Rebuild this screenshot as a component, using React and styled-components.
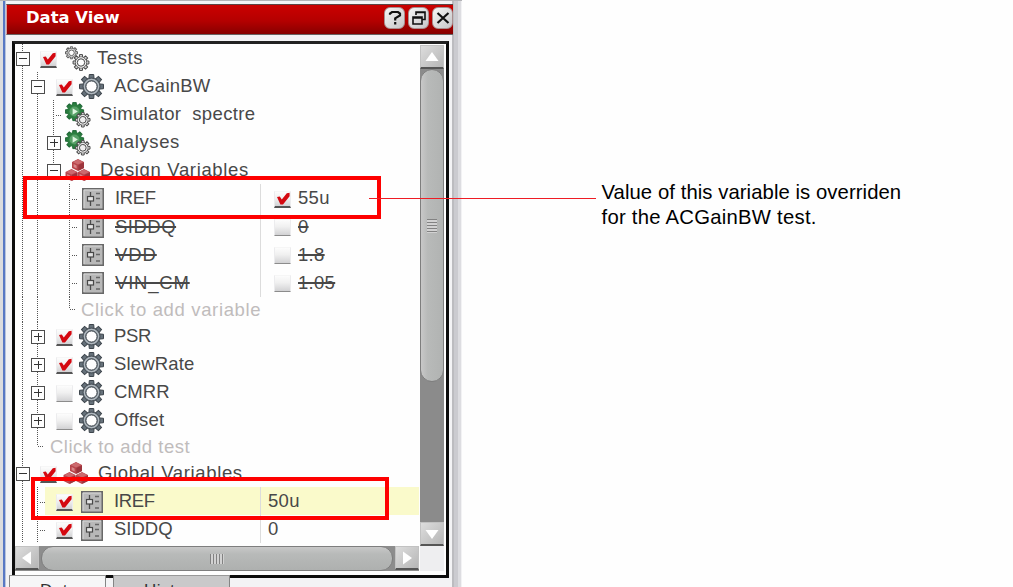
import React from "react";
import styled, { createGlobalStyle, css } from "styled-components";

const Global = createGlobalStyle`
  * { box-sizing: border-box; }
  body { margin: 0; background: #fefefe; overflow: hidden; }
`;

const Page = styled.main`
  display: flex;
  align-items: flex-start;
  position: relative;
  width: 1013px;
  height: 587px;
  overflow: hidden;
  background: #fefefe;
  font-family: "Liberation Sans", Arial, sans-serif;
`;

const Dock = styled.section`
  display: flex;
  flex-direction: column;
  flex: none;
  width: 462px;
  height: 587px;
  padding: 3px 9px 0 3px;
  border-top: 1px solid #b4b4b8;
  background: linear-gradient(90deg, #dcdcde 0 3px, #5878c4 3px 5px, #b8c4dc 5px 6px, #f3f3f5 6px 452px, #bcbcc0 452px 454px, #cbcbd0 454px 458px, #dddde1 458px 461px, #f2f2f4 461px);
`;

const TitleBar = styled.header`
  display: flex;
  align-items: center;
  flex: none;
  gap: 3px;
  margin-left: 3px;
  height: 31px;
  padding: 0 0 3px 19px;
  border: 1px solid #6a6464;
  border-top-color: #5c4444;
  border-right: 0;
  border-left-color: #d8a0a0;
  background: linear-gradient(#cb0000, #b40000 55%, #870000);
`;

const Title = styled.h1`
  flex: 1;
  margin: 0;
  color: #fff;
  font: bold 16.4px/20px "DejaVu Sans", sans-serif;
`;

const TitleButton = styled.button`
  display: grid;
  place-items: center;
  width: 21px;
  height: 22px;
  padding: 0;
  border: 1px solid #a88f8f;
  border-radius: 6px;
  background: linear-gradient(135deg, #f6f6f6, #c6c6c8);
`;

const Frame = styled.div`
  display: grid;
  grid-template-columns: 404px 26px;
  grid-template-rows: 502px 25px;
  flex: none;
  width: 437px;
  height: 537px;
  margin: 6px 0 0 9px;
  border: 3px solid #0c0c0c;
  border-top: 3px solid #222;
  border-right-width: 3px;
  background: #fefefe;
`;

const Tree = styled.div`
  overflow: hidden;
  background: #fefefe;
`;

const Row = styled.div`
  display: flex;
  align-items: center;
  width: 404px;
  height: ${(p) => p.$h || 28}px;
  background: ${(p) =>
    p.$selected ? "linear-gradient(90deg, #fefefe 30px, #fafacb 30px)" : "transparent"};
`;

const NameCell = styled.div`
  display: flex;
  align-items: center;
  flex: none;
  align-self: stretch;
  width: ${(p) => (p.$split ? 246 : 404)}px;
  border-right: ${(p) => (p.$split ? "1px solid #dcdcdc" : "0")};
`;

const ValueCell = styled.div`
  display: flex;
  align-items: center;
  padding-left: ${(p) => (p.$checked ? 13 : 7)}px;
  gap: 7px;
`;

const dotsV = "repeating-linear-gradient(180deg, #555 0 1px, transparent 1px 2px)";
const dotsH = "repeating-linear-gradient(90deg, #555 0 1px, transparent 1px 2px)";

const Guide = styled.span`
  display: flex;
  align-items: center;
  justify-content: center;
  flex: none;
  align-self: stretch;
  width: ${(p) => (p.$first ? 15 : 16)}px;
  padding-right: ${(p) => (p.$first ? 0 : 1)}px;
  background-repeat: no-repeat;
  ${(p) => p.$kind === "line" && css`
    background-image: ${dotsV};
    background-size: 1px 100%;
    background-position: 7px 0;
  `}
  ${(p) => p.$kind === "tee" && css`
    background-image: ${dotsV}, ${dotsH};
    background-size: 1px 100%, 5px 1px;
    background-position: 7px 0, 10px 15px;
  `}
  ${(p) => p.$kind === "end" && css`
    background-image: ${dotsV}, ${dotsH};
    background-size: 1px 12px, 5px 1px;
    background-position: 7px 0, 8px 12px;
  `}
  ${(p) => p.$kind === "last" && css`
    background-image: ${dotsV};
    background-size: 1px 9px;
    background-position: 7px 0;
  `}
`;

const Toggle = styled.span`
  position: relative;
  flex: none;
  width: 14px;
  height: 14px;
  margin-top: 2px;
  border: 1px solid #4c4c4c;
  background: #fefefe;
  &::before {
    content: "";
    position: absolute;
    left: 2px;
    top: 5px;
    width: 8px;
    height: 1px;
    background: #333;
  }
  &::after {
    content: "";
    display: ${(p) => (p.$open ? "none" : "block")};
    position: absolute;
    left: 6px;
    top: 2px;
    width: 1px;
    height: 8px;
    background: #333;
  }
`;

const Box = styled.span`
  display: grid;
  place-items: center;
  flex: none;
  width: 17px;
  height: 17px;
  margin: 2px 0 0 ${(p) => p.$x || 0}px;
  border: 1px solid #ececee;
  border-top-color: #f6f6f6;
  border-bottom: ${(p) => (p.$on ? "2px solid #555" : "1px solid #8c8c8c")};
  background: linear-gradient(#fcfcfc, #f0f0f0 45%, #d2d2d4);
`;

const Label = styled.span`
  flex: none;
  margin-left: ${(p) => p.$x || 0}px;
  padding-top: ${(p) => (p.$struck ? 1 : 0)}px;
  color: ${(p) => (p.$muted ? "#c0bcbc" : "#484848")};
  font-size: 18.5px;
  line-height: 24px;
  white-space: pre;
  letter-spacing: ${(p) => p.$track || 0}px;
  text-decoration: ${(p) => (p.$struck ? "line-through" : "none")};
  text-decoration-thickness: 1.5px;
`;

const IconSlot = styled.span`
  display: flex;
  flex: none;
  margin-left: ${(p) => p.$x}px;
  margin-top: 1px;
`;

const VBar = styled.div`
  display: flex;
  flex-direction: column;
  width: 24px;
  margin: 1px 0 0 1px;
  background: #8b8b8b;
`;

const HBar = styled.div`
  display: flex;
  align-items: stretch;
  height: 25px;
  background: #8d8d8d;
`;

const Arrow = styled.div`
  display: grid;
  place-items: center;
  flex: none;
  width: 24px;
  height: 24px;
  border: 1px solid #c2c2c2;
  border-bottom: 2px solid #555;
  background: linear-gradient(135deg, #ddd, #b6b6b6);
`;

const Thumb = styled.div`
  display: grid;
  place-items: center;
  border: 1px solid #7e7e7e;
  border-radius: 12px;
  ${(p) => p.$vertical
    ? css`height: 313px; background: linear-gradient(90deg, #c8c8c8, #b8bab9 30%, #b1b3b2);`
    : css`width: 354px; margin-left: 2px; margin-right: 2px; background: linear-gradient(#c8c8c8, #b8bab9 30%, #aeb0af);`}
`;

const Grip = styled.span`
  width: ${(p) => (p.$vertical ? 10 : 14)}px;
  height: ${(p) => (p.$vertical ? 14 : 10)}px;
  background: repeating-linear-gradient(${(p) => (p.$vertical ? "180deg" : "90deg")}, #828282 0 1px, #d2d2d2 1px 3px);
`;

const Spacer = styled.div`
  flex: 1;
`;

const Corner = styled.div`
  margin-left: 1px;
  width: 24px;
  background: #eeeef0;
`;

const Tabs = styled.nav`
  display: flex;
  flex: none;
  gap: 7px;
  height: 12px;
  margin: -3px 0 0 6px;
  overflow: hidden;
  position: relative;
`;

const Tab = styled.span`
  flex: none;
  width: ${(p) => p.$w}px;
  height: 30px;
  padding: 5px 0 0 ${(p) => p.$pad}px;
  border: 1px solid #858585;
  border-top-color: #999;
  background: ${(p) => (p.$active ? "#f6f6f7" : "#c9c9ca")};
  color: #333;
  font-size: 17px;
  line-height: 20px;
  letter-spacing: 0.5px;
`;

const Note = styled.p`
  display: flex;
  flex-direction: column;
  margin: 180px 0 0 139.5px;
  color: #000;
  font-size: 20.3px;
  line-height: 25px;
  white-space: pre;
`;

const NoteLine = styled.span`
  letter-spacing: ${(p) => p.$track}px;
`;

const Highlight = styled.div`
  position: absolute;
  left: ${(p) => p.$left}px;
  top: ${(p) => p.$top}px;
  width: ${(p) => p.$w}px;
  height: ${(p) => p.$h}px;
  border: 4px solid #fe0000;
`;

const Leader = styled.div`
  position: absolute;
  left: 369px;
  top: 198px;
  width: 227px;
  height: 1px;
  background: #ee1c24;
`;

const Check = () => (
  <svg width="15" height="14" viewBox="0 0 15 14">
    <path d="M2 5 L4.8 4.6 L6.8 7.6 L11.8 1.2 L14.6 0.8 L14.6 4.2 L8 12.6 L5.4 12.6 Z" fill="#d40810" />
  </svg>
);

const CheckBox = ({ on, x }) => (
  <Box $on={on} $x={x}>{on && <Check />}</Box>
);

const teeth = [0, 45, 90, 135, 180, 225, 270, 315];

const GearShape = ({ cx, cy, s = 1, body = "#66717a", edge = "#3d454c", hole = "#fefefe", light = "#b0b8be" }) => (
  <g transform={`translate(${cx} ${cy}) scale(${s})`}>
    {teeth.map((a) => (
      <path key={a} d="M-2.6 -7.5 L-2.2 -12 L2.2 -12 L2.6 -7.5 Z" transform={`rotate(${a})`} fill={body} stroke={edge} strokeWidth={1 / s} />
    ))}
    <circle r="8.6" fill={body} stroke={edge} strokeWidth={0.7 / s} />
    <circle r="7" fill="none" stroke={light} strokeWidth="1.5" />
    <circle r="5.6" fill={hole} stroke={edge} strokeWidth={1 / s} />
  </g>
);

const Gear = () => (
  <svg width="26" height="26" viewBox="0 0 26 26"><GearShape cx={12.5} cy={12.5} /></svg>
);

const TwoGears = () => (
  <svg width="26" height="26" viewBox="0 0 26 26">
    <GearShape cx={7.5} cy={6.8} s={0.5} body="#dcdcdc" edge="#606060" light="#f4f4f4" />
    <GearShape cx={17} cy={16.5} s={0.66} body="#d4d4d4" edge="#484848" light="#f4f4f4" />
  </svg>
);

const RunGears = () => (
  <svg width="26" height="26" viewBox="0 0 26 26">
    <GearShape cx={9.5} cy={9.5} s={0.76} body="#267a3c" edge="#226838" light="#348848" hole="#48985a" />
    <circle cx="9.5" cy="9.5" r="7.4" fill="#2c7e40" />
    <circle cx="9.5" cy="9.5" r="5" fill="#56a066" />
    <path d="M7.6 6.2 L12.8 9.5 L7.6 12.8 Z" fill="#dcf4de" />
    <GearShape cx={17.8} cy={17.8} s={0.6} body="#dedede" edge="#4a4a4a" light="#fff" hole="#eee" />
  </svg>
);

const Cube = ({ x, y }) => (
  <g transform={`translate(${x} ${y})`}>
    <path d="M0 3 L6 0 L12 3 L12 9 L6 12 L0 9 Z" fill="#b8464c" />
    <path d="M0.8 3 L6 0.6 L11.2 3 L6 5.6 Z" fill="#cc6a6e" />
    <path d="M6.4 6 L12 3.4 L12 9 L6.4 11.8 Z" fill="#9c343c" />
    <path d="M1.6 5 L4.6 6.4 L4.6 9.4 L1.6 8 Z" fill="#d8888a" />
  </g>
);

const Cubes = () => (
  <svg width="26" height="23" viewBox="0 0 26 23">
    <Cube x={7} y={0} /><Cube x={0.5} y={10} /><Cube x={13} y={10} />
  </svg>
);

const Slider = () => (
  <svg width="22" height="22" viewBox="0 0 22 22">
    <rect x="0.75" y="0.75" width="20.5" height="20.5" fill="#b8b8b8" stroke="#686868" strokeWidth="1.5" />
    <path d="M2 20 V2 H20" fill="none" stroke="#d8d8d8" />
    <path d="M8.5 4 V18" stroke="#4c4c4c" strokeWidth="1.3" />
    <rect x="5.5" y="8.5" width="6" height="4.5" fill="#e4e4e4" stroke="#484848" strokeWidth="1.2" />
    <path d="M14 5.5 H18 M14 10.5 H18 M14 17 H18" stroke="#666" strokeWidth="1.5" />
  </svg>
);

const icons = { gear: Gear, gears: TwoGears, run: RunGears, cubes: Cubes, slider: Slider };

const rows = [
  { guides: ["-"], check: true, cx: 10, icon: "gears", ix: 7, text: "Tests", tx: 7, track: 0.6 },
  { guides: ["line", "-"], check: true, cx: 10, icon: "gear", ix: 6, text: "ACGainBW", tx: 9, track: 0.25 },
  { guides: ["line", "line", "tee"], icon: "run", ix: 3, text: "Simulator  spectre", tx: 9, track: 0.35 },
  { guides: ["line", "line", "+"], icon: "run", ix: 3, text: "Analyses", tx: 9, track: 0.6 },
  { guides: ["line", "line", "-"], icon: "cubes", ix: 3, text: "Design Variables", tx: 9, track: 0.65, lastChild: true },
  { guides: ["line", "line", "", "tee"], icon: "slider", ix: 4, text: "IREF", tx: 11, track: -0.4, value: "55u", vcheck: "on" },
  { guides: ["line", "line", "", "tee"], icon: "slider", ix: 4, text: "SIDDQ", tx: 11, track: 0.5, value: "0", vcheck: "off", struck: true },
  { guides: ["line", "line", "", "tee"], icon: "slider", ix: 4, text: "VDD", tx: 11, track: 0.9, value: "1.8", vcheck: "off", struck: true },
  { guides: ["line", "line", "", "tee"], icon: "slider", ix: 4, text: "VIN_CM", tx: 11, track: 0.8, value: "1.05", vcheck: "off", struck: true, h: 29 },
  { guides: ["line", "line", "", "end"], text: "Click to add variable", tx: 3, muted: true, h: 25, track: 0.65 },
  { guides: ["line", "+"], check: true, cx: 10, icon: "gear", ix: 6, text: "PSR", tx: 9, track: -0.3 },
  { guides: ["line", "+"], check: true, cx: 10, icon: "gear", ix: 6, text: "SlewRate", tx: 9, track: 0.15 },
  { guides: ["line", "+"], check: false, cx: 10, icon: "gear", ix: 6, text: "CMRR", tx: 9 },
  { guides: ["line", "+"], check: false, cx: 10, icon: "gear", ix: 6, text: "Offset", tx: 9, track: 0.25 },
  { guides: ["line", "end"], text: "Click to add test", tx: 4, muted: true, h: 25, track: 0.5 },
  { guides: ["-"], check: true, cx: 10, icon: "cubes", ix: 6, text: "Global Variables", tx: 9, track: 0.65 },
  { guides: ["line", "tee"], check: true, cx: 10, icon: "slider", ix: 8, text: "IREF", tx: 11, track: -0.4, value: "50u", selected: true },
  { guides: ["line", "tee"], check: true, cx: 10, icon: "slider", ix: 8, text: "SIDDQ", tx: 11, value: "0", h: 28 },
];

const TreeRow = ({ row }) => {
  const Icon = icons[row.icon];
  const split = row.value !== undefined;
  return (
    <Row $h={row.h} $selected={row.selected}>
      <NameCell $split={split}>
        {row.guides.map((g, i) => {
          const toggle = g === "-" || g === "+";
          const kind = toggle ? (row.lastChild ? "last" : "line") : g;
          return (
            <Guide key={i} $first={i === 0} $kind={kind}>
              {toggle && <Toggle $open={g === "-"} />}
            </Guide>
          );
        })}
        {row.check !== undefined && <CheckBox on={row.check} x={row.cx} />}
        {Icon && <IconSlot $x={row.ix}><Icon /></IconSlot>}
        <Label $x={row.tx} $track={row.track} $muted={row.muted} $struck={row.struck}>{row.text}</Label>
      </NameCell>
      {split && (
        <ValueCell $checked={row.vcheck}>
          {row.vcheck && <CheckBox on={row.vcheck === "on"} />}
          <Label $track={0.3} $struck={row.struck}>{row.value}</Label>
        </ValueCell>
      )}
    </Row>
  );
};

const ArrowIcon = ({ turn }) => (
  <svg width="16" height="14" viewBox="-8 -7 16 14">
    <path d="M-6.5 4 L0 -5 L6.5 4 Z" fill="#fff" transform={`rotate(${turn})`} />
  </svg>
);

export default function App() {
  return (
    <Page>
      <Global />
      <Dock>
        <TitleBar>
          <Title>Data View</Title>
          <TitleButton aria-label="Help">
            <svg width="16" height="16" viewBox="0 0 16 16" fill="none" stroke="#111" strokeWidth="2.2">
              <path d="M3 4.8 V3.5 L5 2 H11 L13 3.5 V5.5 L8.2 8.4 V10.4 M8.2 12 V14.4" />
            </svg>
          </TitleButton>
          <TitleButton aria-label="Float">
            <svg width="16" height="16" viewBox="0 0 16 16" fill="none" stroke="#111" strokeWidth="1.6">
              <path d="M5 5 V2 H14 V9.5 H11 M5 2.4 H14 M2 7 H11 V14 H2 Z M2 8 H11" />
            </svg>
          </TitleButton>
          <TitleButton aria-label="Close">
            <svg width="16" height="16" viewBox="0 0 16 16" fill="none" stroke="#111" strokeWidth="2.2">
              <path d="M2.5 3 L13.5 13 M13.5 3 L2.5 13" />
            </svg>
          </TitleButton>
        </TitleBar>
        <Frame>
          <Tree>{rows.map((row, i) => <TreeRow key={i} row={row} />)}</Tree>
          <VBar>
            <Arrow><ArrowIcon turn={0} /></Arrow>
            <Thumb $vertical><Grip $vertical /></Thumb>
            <Spacer />
            <Arrow><ArrowIcon turn={180} /></Arrow>
          </VBar>
          <HBar>
            <Arrow><ArrowIcon turn={-90} /></Arrow>
            <Thumb><Grip /></Thumb>
            <Arrow><ArrowIcon turn={90} /></Arrow>
          </HBar>
          <Corner />
        </Frame>
        <Tabs>
          <Tab $active $w={97} $pad={30}>Data</Tab>
          <Tab $w={117} $pad={30}>History</Tab>
        </Tabs>
      </Dock>
      <Note>
        <NoteLine $track={0.07}>Value of this variable is overriden</NoteLine>
        <NoteLine $track={0.25}>for the ACGainBW test.</NoteLine>
      </Note>
      <Highlight $left={23} $top={176} $w={358} $h={43} />
      <Highlight $left={31} $top={477} $w={358} $h={43} />
      <Leader />
    </Page>
  );
}
